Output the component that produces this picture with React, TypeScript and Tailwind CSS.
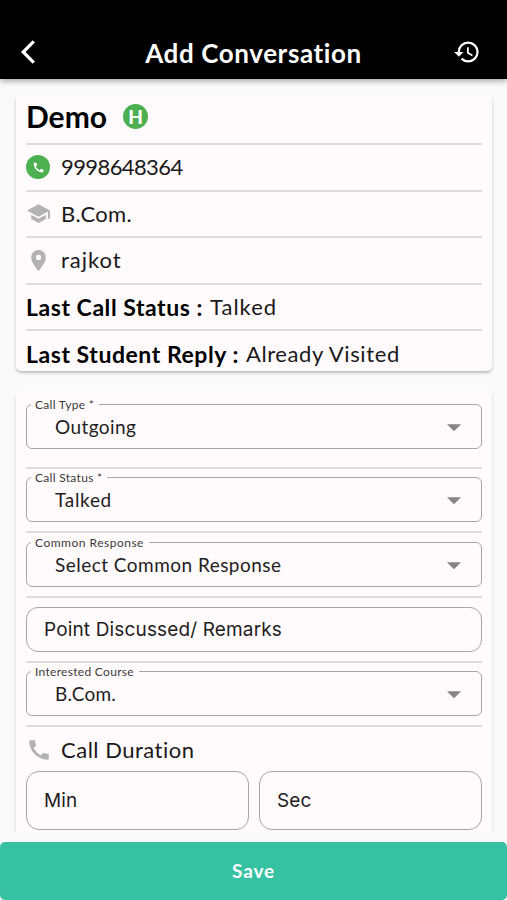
import React from 'react';
import { MdHistory, MdSchool, MdLocationOn, MdCall, MdArrowDropDown } from 'react-icons/md';

const Divider = () => <div className="h-[2px] w-full shrink-0 bg-[#e0dadc]" />;

type SelectFieldProps = {
  label: string;
  value: string;
  labelClass: string;
  valueClass: string;
};

function SelectField({ label, value, labelClass, valueClass }: SelectFieldProps) {
  return (
    <div className="relative flex h-[45px] w-full shrink-0 items-center justify-between rounded-[6px] border-[1.5px] border-[#a9a5a7] pl-[28px] pr-[10px]">
      <span className={`absolute left-[4px] top-[-8px] bg-[#fffbfc] pl-[4px] pr-[5px] text-[12px] leading-4 text-[#3c3a3b] whitespace-nowrap ${labelClass}`}>
        {label}
      </span>
      <span className={`text-[19px] leading-6 text-[#1f1d1e] whitespace-nowrap ${valueClass}`}>{value}</span>
      <MdArrowDropDown className="h-[34px] w-[34px] text-[#868485]" />
    </div>
  );
}

export default function App() {
  const details = [
    {
      icon: (
        <div className="flex h-6 w-6 items-center justify-center rounded-full bg-[#4caf50]">
          <MdCall className="h-[13px] w-[13px] text-white" />
        </div>
      ),
      text: '9998648364',
      textClass: 'tracking-[-0.6px]',
    },
    {
      icon: <MdSchool className="h-[25px] w-[25px] text-[#b3b1b2]" />,
      text: 'B.Com.',
      textClass: 'tracking-[0.3px]',
    },
    {
      icon: <MdLocationOn className="h-[25px] w-[25px] text-[#b3b1b2]" />,
      text: 'rajkot',
      textClass: 'tracking-[1px]',
    },
  ];

  const statuses = [
    { label: 'Last Call Status :', value: 'Talked', labelClass: 'tracking-[0.55px]', valueClass: 'tracking-[1px]' },
    { label: 'Last Student Reply :', value: 'Already Visited', labelClass: 'tracking-[0.55px]', valueClass: 'tracking-[0.6px]' },
  ];

  return (
    <div className="flex h-[900px] w-full flex-col overflow-hidden bg-[#fafafa] font-[Lato,sans-serif] text-black">
      {/* App bar */}
      <header className="z-10 flex h-[79px] shrink-0 items-end justify-between bg-black pb-[13px] pl-[20px] pr-[26px] text-white shadow-[0_2px_6px_rgba(0,0,0,0.35)]">
        <svg className="mb-[1px] h-[26px] w-[34px]" viewBox="0 0 34 26" fill="none" stroke="currentColor" strokeWidth="3.2">
          <path d="M13.8 2.4 L3.2 13 L13.8 23.6" />
        </svg>
        <h1 className="text-[26px] font-bold leading-[26px] tracking-[0.6px] whitespace-nowrap">Add Conversation</h1>
        <MdHistory className="h-[28px] w-[28px]" />
      </header>

      <main className="flex h-[753px] shrink-0 flex-col overflow-hidden pl-[16px] pr-[15px] pt-[15px]">
        {/* Student card */}
        <section className="flex h-[277px] shrink-0 flex-col rounded-[5px] bg-[#fffbfc] px-[10px] shadow-[0_2px_3px_rgba(0,0,0,0.24)]">
          <div className="flex h-[49px] shrink-0 items-center gap-[16px] pb-[5px]">
            <h2 className="text-[30px] font-bold leading-8">Demo</h2>
            <div className="flex h-[25px] w-[25px] items-center justify-center rounded-full bg-[#4caf50] text-[19px] font-black leading-none text-white">
              H
            </div>
          </div>
          {details.map((item) => (
            <React.Fragment key={item.text}>
              <Divider />
              <div className="flex h-[44.5px] shrink-0 items-center">
                <div className="flex w-[35px] items-center">{item.icon}</div>
                <span className={`text-[22px] leading-7 text-[#1a1819] ${item.textClass}`}>{item.text}</span>
              </div>
            </React.Fragment>
          ))}
          {statuses.map((item) => (
            <React.Fragment key={item.label}>
              <Divider />
              <div className="flex h-[44.5px] shrink-0 items-center gap-[7px] pt-px text-[22px] leading-7 whitespace-nowrap">
                <span className={`text-[23px] font-bold ${item.labelClass}`}>{item.label}</span>
                <span className={`text-[#1a1819] ${item.valueClass}`}>{item.value}</span>
              </div>
            </React.Fragment>
          ))}
        </section>

        {/* Conversation form */}
        <section className="mt-[20px] flex h-[480px] shrink-0 flex-col rounded-[5px] bg-[#fffbfc] px-[10px] pt-[13px] shadow-[0_2px_3px_rgba(0,0,0,0.18)]">
          <SelectField label="Call Type *" value="Outgoing" labelClass="tracking-[0.3px]" valueClass="tracking-[0.4px]" />
          <div className="h-[18px] shrink-0" />
          <Divider />
          <div className="h-[8px] shrink-0" />
          <SelectField label="Call Status *" value="Talked" labelClass="tracking-[0.3px]" valueClass="tracking-[0.7px]" />
          <div className="h-[9px] shrink-0" />
          <Divider />
          <div className="h-[9px] shrink-0" />
          <SelectField label="Common Response" value="Select Common Response" labelClass="tracking-[0.5px]" valueClass="tracking-[0.47px]" />
          <div className="h-[9px] shrink-0" />
          <Divider />
          <div className="h-[9px] shrink-0" />
          <div className="flex h-[45px] shrink-0 items-center rounded-[12px] border-[1.5px] border-[#a9a5a7] pl-[17px] pt-px font-[Inter,sans-serif] text-[19px] tracking-[0.15px] text-[#1f1d1e]">
            Point Discussed/ Remarks
          </div>
          <div className="h-[9px] shrink-0" />
          <Divider />
          <div className="h-[8px] shrink-0" />
          <SelectField label="Interested Course" value="B.Com." labelClass="tracking-[0.3px]" valueClass="tracking-[0.2px]" />
          <div className="h-[9px] shrink-0" />
          <Divider />
          <div className="flex h-[44px] shrink-0 items-center pt-[2px]">
            <div className="flex w-[35px] items-center">
              <MdCall className="h-[26px] w-[26px] text-[#b3b1b2]" />
            </div>
            <span className="text-[22px] leading-7 tracking-[0.5px] text-[#1a1819]">Call Duration</span>
          </div>
          <div className="grid h-[59px] shrink-0 grid-cols-2 gap-[10px] font-[Inter,sans-serif] text-[19px] tracking-[0.15px] text-[#1f1d1e]">
            <div className="flex items-center rounded-[13px] border-[1.5px] border-[#a9a5a7] pl-[17px] pt-[2px]">Min</div>
            <div className="flex items-center rounded-[13px] border-[1.5px] border-[#a9a5a7] pl-[17px] pt-[2px]">Sec</div>
          </div>
        </section>
      </main>

      <button className="mt-[10px] flex h-[58px] w-full shrink-0 items-center justify-center rounded-[5px] bg-[#36c1a3] text-[19px] font-bold tracking-[0.8px] text-white">
        Save
      </button>
    </div>
  );
}
